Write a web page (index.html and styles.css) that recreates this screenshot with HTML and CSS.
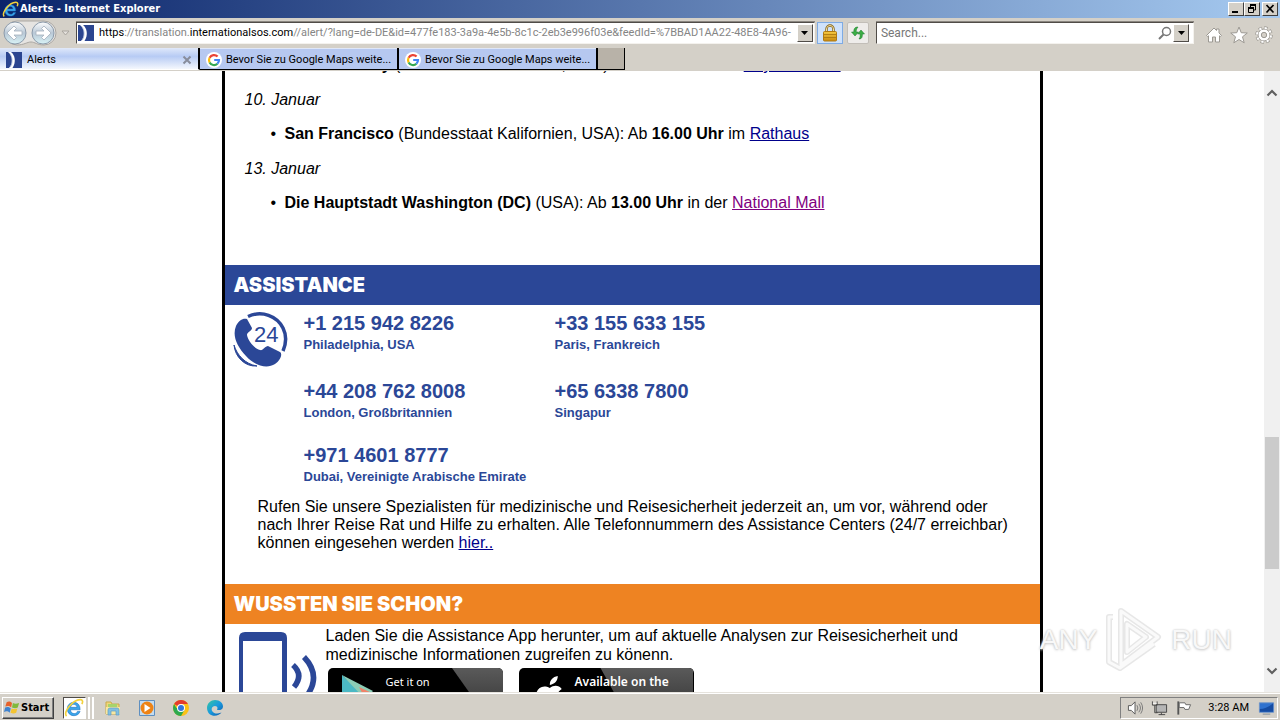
FILE: index.html
```html
<!DOCTYPE html>
<html lang="de">
<head>
<meta charset="utf-8">
<title>Alerts - Internet Explorer</title>
<link rel="stylesheet" href="styles.css">
</head>
<body>
<svg class="defs" aria-hidden="true">
  <defs>
    <linearGradient id="glass" x1="0" y1="0" x2="0" y2="1"><stop offset="0" stop-color="#fff"/><stop offset=".5" stop-color="#b9c8d6"/><stop offset="1" stop-color="#d9f3f6"/></linearGradient>
    <linearGradient id="shine" x1="0" y1="0" x2="0" y2="1"><stop offset="0" stop-color="#5a5a5a"/><stop offset="1" stop-color="#2b2b2b"/></linearGradient>
    <linearGradient id="gold" x1="0" y1="0" x2="0" y2="1"><stop offset="0" stop-color="#f5c842"/><stop offset="1" stop-color="#c98a10"/></linearGradient>
    <linearGradient id="edge" x1="0" y1="0" x2="1" y2="1"><stop offset="0" stop-color="#36c7a0"/><stop offset=".5" stop-color="#1a9ade"/><stop offset="1" stop-color="#0b57a8"/></linearGradient>
    <symbol id="ie" viewBox="0 0 18 18">
      <path d="M14.5 10.6H5.8c.2 4.300 5.700 4.200 6.200 1.500h2.500C12.600 17.800 3 17.200 3 9.800 3 2 14.900 1.500 14.500 10.600zM5.900 8.400h5.800c-.3-3.600-5.400-3.600-5.800 0z" fill="#3aa6ea" stroke="#1c6fc0" stroke-width=".5"/>
      <path d="M2.300 16.300C-.8 13 7.500 1.600 14.600 1.400c2.400-.1 2.500 2 1.500 4.100" fill="none" stroke="#f3d23c" stroke-width="1.500"/>
    </symbol>
    <symbol id="sos" viewBox="0 0 16 16">
      <path fill="#2b4590" d="M0 0h16v16H0z"/>
      <path d="M2 0c5 4 5 12 1 16h3.500C10.500 10 9 3 5 0z" fill="#fff"/>
      <path d="M3.300 1c3.500 4 3.500 10 1 14" fill="none" stroke="#8fa3cf" stroke-width=".6"/>
    </symbol>
    <symbol id="google" viewBox="0 0 16 16">
      <circle cx="8" cy="8" r="8" fill="#fff"/>
      <g fill="none" stroke-width="2.200"><path d="M11.600 4.600A5 5 0 0 0 3.600 5.700" stroke="#ea4335"/><path d="M3.600 5.700a5 5 0 0 0 0 4.700" stroke="#fbbc05"/><path d="M3.600 10.400a5 5 0 0 0 7.800 1.300" stroke="#34a853"/><path d="M11.400 11.700A5 5 0 0 0 13 8H8.200" stroke="#4285f4"/></g>
    </symbol>
    <symbol id="down" viewBox="0 0 7 4"><path d="M0 0h7L3.500 4z"/></symbol>
  </defs>
</svg>
<div class="window">
  <header class="title-bar">
    <svg class="ie-small"><use href="#ie"/></svg>
    <h1>Alerts - Internet Explorer</h1>
    <div class="window-buttons">
      <button aria-label="Minimieren"><svg viewBox="0 0 14 12"><path d="M3 8h6v2H3z"/></svg></button>
      <button aria-label="Wiederherstellen"><svg viewBox="0 0 14 12"><path d="M5 1.500h6M5 2.500h6M5.500 2v2M10.500 2v5H8M3 4.500h6M3 5.500h6M3.500 5v4.500h5V5" fill="none" stroke="#000"/></svg></button>
      <button class="close" aria-label="Schließen"><svg viewBox="0 0 14 12"><path d="M3.500 2l7 7.500M10.500 2l-7 7.500" stroke="#000" stroke-width="1.700"/></svg></button>
    </div>
  </header>

  <nav class="nav-bar">
    <div class="history">
      <svg class="history-back" viewBox="0 0 56 26" aria-hidden="true"><path d="M15 1h27a12 12 0 0 1 0 24c-7 0-9-3-13-3s-7 3-14 3A12 12 0 0 1 15 1z" fill="#e6e4e1" stroke="#aaa7a3"/></svg>
      <button aria-label="Zurück"><svg viewBox="0 0 24 24"><circle cx="12" cy="12" r="11" fill="url(#glass)" stroke="#8c9bab"/><path d="M4 12l7-7 2.500 2.500-2.500 2.500h8v4h-8l2.500 2.500L11 19z" fill="#fff" stroke="#a5b0bd" stroke-width=".8"/></svg></button>
      <button aria-label="Vorwärts"><svg viewBox="0 0 24 24"><circle cx="12" cy="12" r="11" fill="url(#glass)" stroke="#8c9bab"/><path d="M20 12l-7-7-2.500 2.500L13 10H5v4h8l-2.500 2.500L13 19z" fill="#fff" stroke="#a5b0bd" stroke-width=".8"/></svg></button>
    </div>
    <svg class="recent" viewBox="0 0 9 6"><path d="M1 1h7L4.500 5z" fill="#e4e1dc" stroke="#aaa69f"/></svg>
    <div class="field address">
      <svg class="favicon"><use href="#sos"/></svg>
      <div class="url" contenteditable="true" role="textbox" aria-label="Adresse" spellcheck="false"><b>https</b>://translation.<b>internationalsos.com</b>//alert/?lang=de-DE&amp;id=477fe183-3a9a-4e5b-8c1c-2eb3e996f03e&amp;feedId=%7BBAD1AA22-48E8-4A96-</div>
      <button class="drop" aria-label="Adressen anzeigen"><svg><use href="#down"/></svg></button>
    </div>
    <button class="lock" aria-label="Sicherheitsbericht"><svg viewBox="0 0 16 18"><path d="M4.500 9V5a3.500 3.500 0 0 1 7 0v4" fill="none" stroke="#806018" stroke-width="2.400"/><path d="M4.500 9V5a3.500 3.500 0 0 1 7 0v4" fill="none" stroke="#f2dfa0"/><rect x="1.500" y="7.500" width="13" height="9.500" rx="1" fill="url(#gold)" stroke="#b07a13"/><path d="M2 10.500h12M2 13.500h12" stroke="#a8740e" stroke-width=".8"/></svg></button>
    <button class="refresh" aria-label="Aktualisieren"><svg viewBox="0 0 16 16"><path d="M8 2C4.500 2 3.800 4 3.800 7H1.500l3.500 4 3.500-4H6.200c0-2 .3-3 1.800-5z" fill="#3cae45" stroke="#17762a" stroke-width=".5"/><path d="M9 14c3 0 3.400-2 3.400-5h2.100L11 5 7.500 9h2.600c0 2 .3 3-1.100 5z" fill="#3cae45" stroke="#17762a" stroke-width=".5"/></svg></button>
    <div class="field search">
      <input type="text" placeholder="Search..." aria-label="Suche">
      <svg class="lens" viewBox="0 0 14 14"><circle cx="8.500" cy="5.500" r="4" fill="none" stroke="#777" stroke-width="1.500"/><path d="M5.500 8.500L1 13" stroke="#777" stroke-width="2"/></svg>
      <button class="drop" aria-label="Suchanbieter"><svg><use href="#down"/></svg></button>
    </div>
    <div class="tools">
      <button aria-label="Startseite"><svg viewBox="0 0 18 18"><path d="M1.500 9.500L9 2l2.500 2.500V3h2.500v4l2.500 2.500-1.200 1-.8-.7V16h-4v-5h-3v5h-4V9.800l-.8.7z" fill="#fff" stroke="#9c9993"/></svg></button>
      <button aria-label="Favoriten"><svg viewBox="0 0 18 18"><path d="M9 1l2.200 5.700 6.100.3-4.800 3.800 1.700 6L9 13.500l-5.200 3.300 1.700-6L.7 7l6.100-.3z" fill="#fff" stroke="#9c9993"/></svg></button>
      <button aria-label="Extras"><svg viewBox="0 0 18 18"><circle cx="9" cy="9" r="7" fill="none" stroke="#9c9993" stroke-width="3.500" stroke-dasharray="3.200 2.300"/><circle cx="9" cy="9" r="6" fill="#fff" stroke="#9c9993"/><circle cx="9" cy="9" r="7" fill="none" stroke="#fff" stroke-width="2" stroke-dasharray="2.300 3.200" stroke-dashoffset="-.4"/><circle cx="9" cy="9" r="2.700" fill="#d4d0c8" stroke="#9c9993"/></svg></button>
    </div>
  </nav>

  <div class="tabs">
    <div class="tab active"><svg class="favicon"><use href="#sos"/></svg><span>Alerts</span><button aria-label="Tab schließen"><svg viewBox="0 0 10 10"><path d="M1.500 1.500l7 7M8.500 1.500l-7 7" stroke="#888d9c" stroke-width="2"/></svg></button></div>
    <div class="tab"><svg class="favicon"><use href="#google"/></svg><span>Bevor Sie zu Google Maps weite...</span></div>
    <div class="tab"><svg class="favicon"><use href="#google"/></svg><span>Bevor Sie zu Google Maps weite...</span></div>
    <button class="new-tab" aria-label="Neuer Tab"></button>
  </div>

  <div class="viewport">
    <main class="pane">
      <article class="sheet">
        <section class="events">
          <ul><li><strong>New York City</strong> (Bundesstaat New York, USA): Ab <strong>17.00 Uhr</strong> am <a href="#">City Hall Park</a></li></ul>
          <p>10. Januar</p>
          <ul><li><strong>San Francisco</strong> (Bundesstaat Kalifornien, USA): Ab <strong>16.00 Uhr</strong> im <a href="#">Rathaus</a></li></ul>
          <p>13. Januar</p>
          <ul><li><strong>Die Hauptstadt Washington (DC)</strong> (USA): Ab <strong>13.00 Uhr</strong> in der <a class="visited" href="#">National Mall</a></li></ul>
        </section>
        <h2 class="band blue">ASSISTANCE</h2>
        <section class="assistance">
          <div class="centers">
            <svg class="phone24" viewBox="0 0 56 56" aria-hidden="true">
              <path d="M3 14C6 8 10 6 14 7l5 9c0 3-5 4-5 7 1 6 7 13 13 15 3 1 5-4 8-4l12 6c3 2 0 9-5 12-8 5-20 2-29-8S-1 24 3 14z" fill="#2b4797"/>
              <path d="M15 4.500C29-2 44 4 50 16c4 8 3 16 0 23" fill="none" stroke="#2b4797" stroke-width="3.500"/>
              <path d="M1 33c3 10 11 19 23 21C12 55 2 45 1 33z" fill="#2b4797" stroke="#2b4797"/>
              <text x="21" y="30" class="num24">24</text>
            </svg>
            <address><strong>+1 215 942 8226</strong><span>Philadelphia, USA</span></address>
            <address><strong>+33 155 633 155</strong><span>Paris, Frankreich</span></address>
            <address><strong>+44 208 762 8008</strong><span>London, Großbritannien</span></address>
            <address><strong>+65 6338 7800</strong><span>Singapur</span></address>
            <address><strong>+971 4601 8777</strong><span>Dubai, Vereinigte Arabische Emirate</span></address>
          </div>
          <p>Rufen Sie unsere Spezialisten für medizinische und Reisesicherheit jederzeit an, um vor, während oder nach Ihrer Reise Rat und Hilfe zu erhalten. Alle Telefonnummern des Assistance Centers (24/7 erreichbar) können eingesehen werden <a href="#">hier..</a></p>
        </section>
        <h2 class="band orange">WUSSTEN SIE SCHON?</h2>
        <section class="app">
          <svg class="mobile" viewBox="0 0 80 100" aria-hidden="true">
            <path d="M7 0h36q6 0 6 6v94H1V6q0-6 6-6zM5 9v91h39V9z" fill="#2b4797" fill-rule="evenodd"/>
            <path d="M55 33q11 10 1 22M66 25q18 19 2 40" fill="none" stroke="#2b4797" stroke-width="5.500"/>
          </svg>
          <div>
            <p>Laden Sie die Assistance App herunter, um auf aktuelle Analysen zur Reisesicherheit und medizinische Informationen zugreifen zu könenn.</p>
            <div class="stores">
              <a class="store google" href="#">
                <svg viewBox="0 0 175 58"><path d="M124 0h51v58h-10z" fill="url(#shine)"/><path d="M14 7v46l24-24z" fill="#4bb8c4"/><path d="M14 7l31 16-8 8z" fill="#8ccdb6"/><path d="M31 19l15 7-8 6z" fill="#f0836a"/></svg>
                <span class="small">Get it on</span><span class="large">Google play</span>
              </a>
              <a class="store apple" href="#">
                <svg viewBox="0 0 176 58"><path d="M82 0h94v58h-62z" fill="url(#shine)"/><path d="M31 17c0-5 3-8 8-9 0 5-3 8-8 9zM31 20c4-3 9-3 12 1-7 4-5 13 1 16-4 11-8 10-13 8-5 2-9 3-13-8-4-12 2-22 13-17z" fill="#fff"/></svg>
                <span class="small">Available on the</span><span class="large">App Store</span>
              </a>
            </div>
          </div>
        </section>
      </article>
    </main>
    <div class="scrollbar" aria-hidden="true">
      <svg viewBox="0 0 12 8"><path d="M1.500 6.500L6 2l4.500 4.500" fill="none" stroke="#606060" stroke-width="2.200"/></svg>
      <div class="track"><div class="thumb"></div></div>
      <svg viewBox="0 0 12 8"><path d="M1.500 1.500L6 6l4.500-4.500" fill="none" stroke="#606060" stroke-width="2.200"/></svg>
    </div>
    <div class="watermark">
      <span>ANY</span>
      <svg viewBox="0 0 60 66"><g fill="none" stroke-linejoin="round"><path d="M17 4l37 26-37 28zM9 10H5v45l11 6 34-24M23 17v28l19-15z" stroke="#cfcfcf" stroke-width="6" opacity=".5"/><path d="M17 4l37 26-37 28zM9 10H5v45l11 6 34-24M23 17v28l19-15z" stroke="#fafafa" stroke-width="3"/></g></svg>
      <span>RUN</span>
    </div>
  </div>

  <footer class="taskbar">
    <button class="start"><svg viewBox="0 0 18 16"><path d="M3 2c2-1 4-1 6 1L8 8C6 6 4 6 1.500 7z" fill="#e7622b"/><path d="M10 3c2 1 4 1 7 0l-1.500 5c-2 1-4 1-6.500 0z" fill="#80b93c"/><path d="M1.300 8c2-1 4-1 6.300 1l-1.200 5c-2-2-4-2-6.400-1z" fill="#3f83cf"/><path d="M8.600 9c2 1 4 1 6.400 0l-1.300 5c-2 1-4 1-6.400 0z" fill="#f4c431"/></svg>Start</button>
    <button class="task-active" aria-label="Internet Explorer"><span><svg><use href="#ie"/></svg></span><i></i><i></i></button>
    <div class="pinned">
      <button aria-label="Explorer"><svg viewBox="0 0 18 18"><path d="M2 3h5l1 2h7v10H2z" fill="#efd77a" stroke="#c9aa48"/><path d="M4 5h9v4H4z" fill="#a7d46c"/><path d="M2 8h14v7H2z" fill="#f8e7a0"/><path d="M4 16v-5q0-2 2-2h7q2 0 2 2v5h-3v-4H7v4z" fill="#82bfe1" stroke="#5b9fc9" stroke-width=".7"/></svg></button>
      <button aria-label="Media Player"><svg viewBox="0 0 18 18"><path d="M1.500 1.500h15v15h-15z" fill="#c4dcf0" stroke="#5e8fc0"/><circle cx="9" cy="9" r="6.500" fill="#ee8315"/><path d="M6.500 5v8l6-4z" fill="#fff"/></svg></button>
      <button aria-label="Chrome"><svg viewBox="0 0 18 18"><circle cx="9" cy="9" r="8" fill="#fbc116"/><path d="M9 9L2.100 5A8 8 0 0 1 15.900 5H9z" fill="#e33b2e"/><path d="M2.100 5A8 8 0 0 0 9 17l3.500-6L9 9H4.400z" fill="#2da94f"/><circle cx="9" cy="9" r="4" fill="#fff"/><circle cx="9" cy="9" r="3" fill="#3476dc"/></svg></button>
      <button aria-label="Edge"><svg viewBox="0 0 18 18"><path d="M1 9C1 4 5 1 9 1c5 0 8 3 8 6.500 0 3-3 4-5.500 3.500-1-.3 0-1 0-2 0-2-3-3-5-1-2.500 3 1 7 5 6.500 2-.2 3-1 4-1-3 4.500-14 5.500-14.500-4.500z" fill="url(#edge)"/></svg></button>
    </div>
    <div class="tray">
      <svg viewBox="0 0 18 16"><path d="M1.500 5.500h3l4-4v13l-4-4h-3z" fill="#fff" stroke="#555"/><path d="M10.500 5q2 3 0 6M12.500 3.500q3.500 4.500 0 9M14.500 2q4 6 0 12" fill="none" stroke="#777"/></svg>
      <svg viewBox="0 0 18 16"><path d="M5.500 4.500h11v8h-11z" fill="#b5b5b5" stroke="#444"/><path d="M8 15h7M11 13v2" stroke="#444"/><path d="M1.500 1v4h5V1M4 5v8h3" fill="none" stroke="#444"/><path d="M2 3h4" stroke="#fff"/></svg>
      <svg viewBox="0 0 18 16"><path d="M3.500 1v14" stroke="#555" stroke-width="2"/><path d="M4.500 2.500h6l1 2h5l-2 5h-4l-1-2h-5z" fill="#fff" stroke="#666"/></svg>
      <time>3:28 AM</time>
      <svg class="desktop" viewBox="0 0 18 16"><path d="M1.500 2.500h15v10h-15z" fill="#2f72cf" stroke="#6b93c9"/><path d="M2 9q7 0 14-6v9H2z" fill="#164ca2"/><path d="M5 14.500h8" stroke="#7d8b9b"/></svg>
    </div>
  </footer>
</div>
</body>
</html>
```
FILE: styles.css
```css
* { box-sizing: border-box; }
body {
  margin: 0;
  font: 11px/14px Roboto, "DejaVu Sans Condensed", sans-serif;
  color: #000;
}
button { padding: 0; border: 0; background: none; font: inherit; color: inherit; }
svg { display: block; flex: none; }
.defs { position: absolute; width: 0; height: 0; }
.window { display: flex; flex-direction: column; height: 100vh; background: #d4d0c8; overflow: hidden; }

.title-bar {
  display: flex; align-items: center; gap: 1px; height: 18px; padding: 0 2px;
  background: linear-gradient(90deg, #0a246a, #a6caf0);
  color: #fff;
}
.title-bar h1 { flex: 1; margin: 0; font: bold 11px/16px "DejaVu Sans Condensed", "DejaVu Sans", sans-serif; }
.ie-small { width: 17px; height: 17px; }
.window-buttons { display: flex; }
.window-buttons button {
  width: 16px; height: 14px; background: #d4d0c8;
  border: 1px solid; border-color: #fff #404040 #404040 #fff;
}
.window-buttons svg { width: 14px; height: 12px; }
.window-buttons .close { margin-left: 2px; }

.nav-bar { display: flex; align-items: center; height: 30px; padding: 0 7px 0 3px; }
.history { display: flex; position: relative; gap: 4px; width: 54px; }
.history-back { position: absolute; left: -1px; top: -1px; width: 56px; height: 26px; }
.history button { position: relative; width: 24px; height: 24px; }
.recent { width: 9px; height: 6px; margin: 0 6px 0 4px; }
.field {
  display: flex; align-items: center; height: 22px; background: #fff;
  border: 1px solid; border-color: #504c48 #f4f2ee #f4f2ee #504c48;
  box-shadow: 0 -1px #8a8680;
}
.address { flex: 744 1 0; min-width: 0; padding: 0 1px; }
.favicon { width: 16px; height: 16px; }
.url { flex: 1; min-width: 0; margin-left: 5px; overflow: hidden; white-space: nowrap; color: #858585; outline: 0; }
.url b { font-weight: normal; color: #000; }
.drop {
  display: flex; align-items: center; justify-content: center; flex: none;
  width: 16px; height: 18px; background: #d4d0c8;
  border: 1px solid; border-color: #fff #504c48 #504c48 #fff;
}
.drop svg { width: 7px; height: 4px; }
.lock { width: 26px; height: 22px; margin-left: 2px; background: #cfe2fb; border: 1px solid #7eabe4; }
.lock svg { width: 16px; height: 18px; margin: 0 auto; }
.refresh { width: 22px; height: 22px; margin: 0 7px 0 4px; background: #eeecea; border: 1px solid #c2beb8; border-radius: 2px; }
.refresh svg { width: 16px; height: 16px; margin: 0 auto; }
.search { flex: 316 1 0; min-width: 0; padding-right: 4px; }
.search input { flex: 1; min-width: 0; padding: 0 4px; border: 0; outline: 0; background: none; font: inherit; font-size: 12px; }
.search input::placeholder { color: #777; opacity: 1; }
.lens { width: 14px; height: 14px; margin-right: 1px; }
.tools { display: flex; gap: 7px; margin: 4px 0 0 11px; }
.tools svg { width: 18px; height: 18px; }

.tabs { display: flex; height: 23px; padding-bottom: 1px; }
.tab {
  display: flex; align-items: center; gap: 4px; width: 199px; padding: 2px 6px 0;
  background: #b6c8f0; border: solid #000; border-width: 0 2px 1px 0; box-shadow: inset 0 1px #dfe7f8;
  white-space: nowrap;
}
.tab.active { width: 200px; gap: 5px; background: linear-gradient(#dfe8fa, #b7cbf4 40%, #f4f7fd); border-bottom-color: #fff; }
.tab span { flex: 1; }
.tab button svg { width: 10px; height: 10px; }
.new-tab { width: 27px; background: #b8b2a8; border: solid #000; border-width: 0 1px 1px 0; }

.viewport { display: flex; position: relative; flex: 1; min-height: 0; background: #fff; overflow: hidden; }
.pane { flex: 1; min-width: 0; }
.sheet {
  max-width: 821px; margin: 0 auto; border: solid #000; border-width: 0 3px;
  font: 16px/18px "Liberation Sans", Arial, sans-serif;
}
.sheet a { color: #00008b; }
.sheet a.visited { color: #800080; }
.events { height: 194px; padding-left: 20px; display: flex; flex-direction: column; justify-content: flex-end; padding-bottom: 53px; }
.events p { margin: 0 0 16px; font-style: italic; }
.events ul { margin: 0 0 17px; padding: 0 0 0 26px; list-style: none; }
.events ul:last-child { margin-bottom: 0; }
.events li { display: flex; white-space: pre; }
.events li::before { content: "•"; width: 14px; }
.band { margin: 0; padding: 1px 9px 0; font: 900 20px/39px Inter, "Liberation Sans", sans-serif; color: #fff; }
.blue { background: #2b4797; }
.orange { background: #ee8322; }
.centers { display: grid; grid-template-columns: 71px 251px 1fr; grid-template-rows: 68px 64px 54px; padding: 6px 0 0 8px; color: #2b4797; }
.phone24 { grid-row: 1 / 4; width: 56px; height: 56px; margin-top: 1px; }
.num24 { font: 22px "Liberation Sans", Arial, sans-serif; fill: #2b4797; }
.centers address { font-style: normal; font-weight: bold; white-space: nowrap; }
.centers address:nth-of-type(odd) { grid-column: 2; }
.centers address:nth-of-type(even) { grid-column: 3; }
.centers address:nth-of-type(-n+2) { grid-row: 1; }
.centers strong, .centers span { display: block; }
.centers strong { font-size: 20px; line-height: 24px; }
.centers span { font-size: 13px; line-height: 20px; }
.assistance p { margin: 0; padding: 1px 23px 32px 33px; }
.app { display: flex; padding: 2px 60px 0 13px; }
.mobile { width: 80px; height: 100px; margin: 6px 8px 0 0; }
.app p { margin: 0; line-height: 19px; }
.stores { display: flex; gap: 16px; padding: 4px 0 0 2px; }
.store { position: relative; width: 175px; height: 58px; padding: 5px 0 0 58px; border-radius: 5px; background: #000; overflow: hidden; text-decoration: none; }
.sheet .store { color: #fff; }
.store svg { position: absolute; inset: 0; }
.store span { display: block; position: relative; white-space: nowrap; }
.small { font: 11px/18px "Noto Sans", sans-serif; }
.apple { padding-left: 56px; }
.apple .small { font: 600 12px/18px "Noto Sans", sans-serif; }
.large { font: 22px/24px "Open Sans", sans-serif; }
.google .large { line-height: 18px; }
.scrollbar { display: flex; flex-direction: column; align-items: center; flex: none; width: 16px; padding: 18px 0 17px; background: #f0f0f0; }
.scrollbar svg { width: 12px; height: 8px; }
.track { display: flex; flex-direction: column; flex: 1; width: 14px; }
.track::before { content: ""; flex: 340 1 0; }
.track::after { content: ""; flex: 98 1 0; }
.thumb { flex: 132 1 0; background: #cbcbcb; }
.watermark {
  position: absolute; right: 48px; bottom: 19px; display: flex; align-items: center; gap: 7px;
  font: 28px/40px "Liberation Sans Narrow", "Liberation Sans", sans-serif; color: #f8f8f8;
  text-shadow: 0 0 2px #c4c4c4, 0 1px 3px #ccc;
}
.watermark svg { width: 60px; height: 66px; }

.taskbar { display: flex; align-items: center; height: 28px; padding: 2px 2px 0; border-top: 1px solid #e6e3dd; box-shadow: inset 0 1px #fff; }
.start {
  display: flex; align-items: center; width: 52px; height: 22px; gap: 1px; padding-left: 1px;
  border: 1px solid; border-color: #fff #404040 #404040 #fff; box-shadow: inset -1px -1px #808080;
  font: bold 11px/14px "DejaVu Sans Condensed", "DejaVu Sans", sans-serif;
}
.start svg { width: 16px; height: 15px; }
.task-active { display: flex; gap: 2px; height: 22px; margin-left: 9px; }
.task-active span { display: block; width: 23px; background: #fff; border: 1px solid; border-color: #504c48 #fff #fff #504c48; }
.task-active svg { width: 20px; height: 20px; }
.task-active i { width: 2px; border: 1px solid #fff; }
.pinned { display: flex; gap: 16px; margin-left: 10px; flex: 1; }
.pinned svg { width: 18px; height: 18px; }
.tray { display: flex; align-items: center; gap: 7px; height: 22px; padding: 0 2px 0 6px; border: 1px solid; border-color: #808080 #fff #fff #808080; }
.tray svg { width: 17px; height: 16px; }
.tray time { margin: 0 2px 0 9px; }
```
